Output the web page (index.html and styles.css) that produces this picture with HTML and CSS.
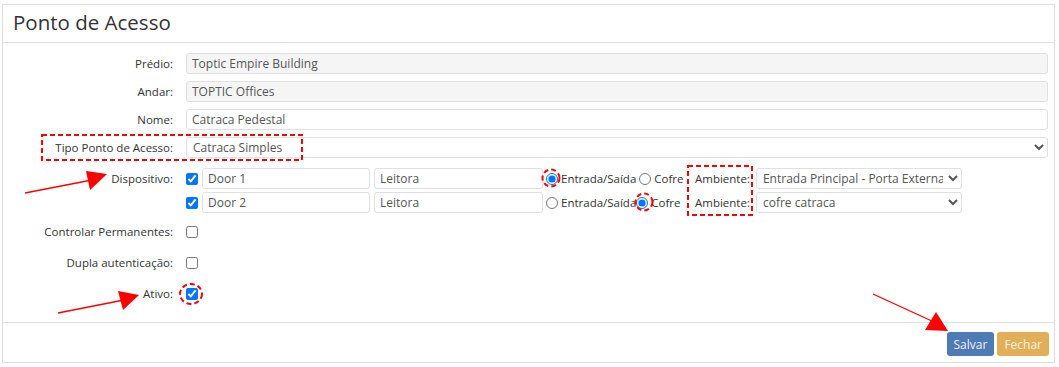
FILE: index.html
```html
<!DOCTYPE html>
<html lang="pt-BR">
<head>
  <meta charset="UTF-8" />
  <title>Ponto de Acesso</title>
  <link rel="stylesheet" href="styles.css">
</head>
<body>

  <div class="panel">
    <div class="panel-head">
      <h1>Ponto de Acesso</h1>
    </div>

    <div class="panel-body">
      <label class="lbl">Prédio:</label>
      <input class="field ro" type="text" value="Toptic Empire Building" readonly>

      <label class="lbl">Andar:</label>
      <input class="field ro" type="text" value="TOPTIC Offices" readonly>

      <label class="lbl">Nome:</label>
      <input class="field" type="text" value="Catraca Pedestal">

      <label class="lbl">Tipo Ponto de Acesso:</label>
      <select class="field">
        <option>Catraca Simples</option>
      </select>

      <label class="lbl lbl-top">Dispositivo:</label>
      <div class="devices">
        <div class="device">
          <input class="chk" type="checkbox" checked>
          <input class="field door" type="text" value="Door 1">
          <input class="field reader" type="text" value="Leitora">
          <span class="opts"><input class="rad" type="radio" name="d1" checked>Entrada/Saída <input class="rad" type="radio" name="d1">Cofre</span>
          <span class="amb">Ambiente:</span>
          <select class="field amb-sel">
            <option>Entrada Principal - Porta Externa</option>
          </select>
        </div>
        <div class="device">
          <input class="chk" type="checkbox" checked>
          <input class="field door" type="text" value="Door 2">
          <input class="field reader" type="text" value="Leitora">
          <span class="opts"> <input class="rad" type="radio" name="d2">Entrada/Saída<input class="rad" type="radio" name="d2" checked>Cofre</span>
          <span class="amb">Ambiente:</span>
          <select class="field amb-sel">
            <option>cofre catraca</option>
          </select>
        </div>
      </div>

      <label class="lbl gap first">Controlar Permanentes:</label>
      <div class="gap first"><input class="chk" type="checkbox"></div>

      <label class="lbl gap">Dupla autenticação:</label>
      <div class="gap"><input class="chk" type="checkbox"></div>

      <label class="lbl gap">Ativo:</label>
      <div class="gap"><input class="chk" type="checkbox" checked></div>
    </div>

    <div class="panel-foot">
      <button class="btn btn-save">Salvar</button>
      <button class="btn btn-close">Fechar</button>
    </div>
  </div>

  <!-- marcações em vermelho -->
  <svg class="marks" width="1059" height="367" viewBox="0 0 1059 367">
    <g fill="none" stroke="#f00" stroke-width="2" stroke-dasharray="5 3">
      <rect x="42" y="135" width="260" height="25" />
      <rect x="688" y="166" width="64" height="49" />
      <circle cx="551" cy="178" r="8.5" />
      <circle cx="644" cy="202" r="8.5" />
      <ellipse cx="191" cy="294" rx="11" ry="10" />
    </g>
    <g stroke="#f00" stroke-width="1.3">
      <line x1="25" y1="193" x2="92" y2="180" />
      <line x1="58" y1="313" x2="124" y2="300" />
      <line x1="873" y1="294" x2="934" y2="322" />
    </g>
    <g fill="#f00">
      <polygon points="86,171 90,190 107,174" />
      <polygon points="118,291 123,310 139,295" />
      <polygon points="936,312 925,330 948,331" />
    </g>
  </svg>

</body>
</html>
```

FILE: styles.css
```css
body {
  margin: 0;
  padding: 4px 4px 5px 2px;
  background: #fff;
  font-family: 'Open Sans', 'Liberation Sans', sans-serif;
  font-size: 11.5px;
  color: #333;
}

.panel {
  border: 1px solid #ddd;
  background: #fff;
}

.panel-head {
  height: 37px;
  border-bottom: 1px solid #e2e2e2;
  padding-left: 10px;
}

h1 {
  margin: 0;
  font-size: 20.5px;
  font-weight: 400;
  line-height: 35px;
  color: #333;
}

.panel-body {
  display: grid;
  grid-template-columns: 170px 1fr;
  column-gap: 13px;
  row-gap: 7px;
  padding: 10px 6px 18px 0;
  align-items: center;
}

.lbl {
  text-align: right;
  line-height: 21px;
}

.lbl-top {
  align-self: start;
  margin-top: 3px;
}

.field {
  box-sizing: border-box;
  height: 21px;
  margin: 0;
  padding: 0 5px;
  border: 1px solid #e0e0e0;
  border-radius: 3px;
  background: #fff;
  font-family: inherit;
  font-size: 12px;
  color: #555;
}

.ro {
  background: #f5f5f5;
}

select.field {
  padding: 0 2px;
}

.devices {
  display: flex;
  flex-direction: column;
  gap: 3px;
  margin-top: 3px;
}

.device {
  display: flex;
  align-items: center;
}

.chk {
  width: 12px;
  height: 12px;
  margin: 0;
}

.device .chk {
  margin-right: 4px;
}

.door {
  width: 168px;
  margin-right: 4px;
}

.reader {
  width: 169px;
}

.opts {
  white-space: pre;
  display: flex;
  align-items: center;
  width: 139px;
  padding-left: 3px;
  box-sizing: border-box;
}

.rad {
  width: 12px;
  height: 12px;
  margin: 0 3px 0 0;
}

.amb {
  margin-left: 13px;
  margin-right: 6px;
}

.amb-sel {
  width: 206px;
}

.gap {
  margin-top: 3px;
  line-height: 21px;
  display: flex;
  align-items: center;
}

.gap.first {
  margin-top: 1px;
}

.lbl.gap {
  display: block;
}

.panel-foot {
  border-top: 1px solid #e2e2e2;
  padding: 9px 5px 6px 0;
  display: flex;
  justify-content: flex-end;
  gap: 3px;
}

.btn {
  height: 24px;
  padding: 0 7px;
  border: none;
  border-radius: 3px;
  font-family: inherit;
  font-size: 12px;
  color: #eef2f8;
  cursor: pointer;
}

.btn-save {
  background: #4e7ab5;
}

.btn-close {
  background: #e2ae57;
  color: #fbf3e4;
}

.marks {
  position: absolute;
  top: 0;
  left: 0;
  pointer-events: none;
}
```
